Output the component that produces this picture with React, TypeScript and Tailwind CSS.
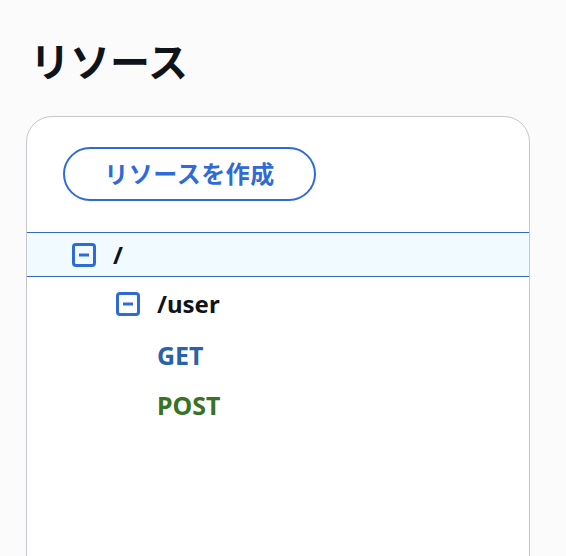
import React from "react";

const font = { fontFamily: '"Noto Sans", "Noto Sans CJK JP", sans-serif' };

function CollapseIcon() {
  return (
    <svg width="24" height="24" viewBox="0 0 24 24" fill="none" className="shrink-0">
      <rect x="1.5" y="1.5" width="21" height="21" rx="2.5" stroke="#2f6bd6" strokeWidth="3" />
      <line x1="7" y1="12" x2="17" y2="12" stroke="#2f6bd6" strokeWidth="3" />
    </svg>
  );
}

export default function App() {
  return (
    <div className="min-h-[556px] overflow-hidden bg-[#fbfbfb] text-[#0f141a]" style={font}>
      <h1 className="pl-[30px] pt-[34px] text-[40px] font-bold leading-[56px]">リソース</h1>

      <div className="ml-[26px] mt-[26px] h-[500px] w-[504px] rounded-t-[26px] border border-[#c6c6cd] bg-white">
        <div className="pl-[36px] pt-[30px]">
          <button className="flex h-[54px] w-[253px] items-center justify-center rounded-full border-2 border-[#2f6bd6] text-[24px] font-bold tracking-[0.5px] text-[#2f6bd6]">
            リソースを作成
          </button>
        </div>

        <div className="mt-[31px] flex h-[45px] items-center gap-[17px] border-y border-[#3567c4] bg-[#f1faff] pl-[45px]">
          <CollapseIcon />
          <span className="text-[24px] font-bold">/</span>
        </div>

        <div className="flex h-[54px] items-center gap-[17px] pl-[89px]">
          <CollapseIcon />
          <span className="text-[24px] font-bold">/user</span>
        </div>

        <div className="flex h-[50px] items-center pl-[130px]">
          <span className="text-[25px] font-bold text-[#2a62aa]">GET</span>
        </div>

        <div className="flex h-[50px] items-center pl-[130px]">
          <span className="text-[25px] font-bold text-[#387324]">POST</span>
        </div>
      </div>
    </div>
  );
}
